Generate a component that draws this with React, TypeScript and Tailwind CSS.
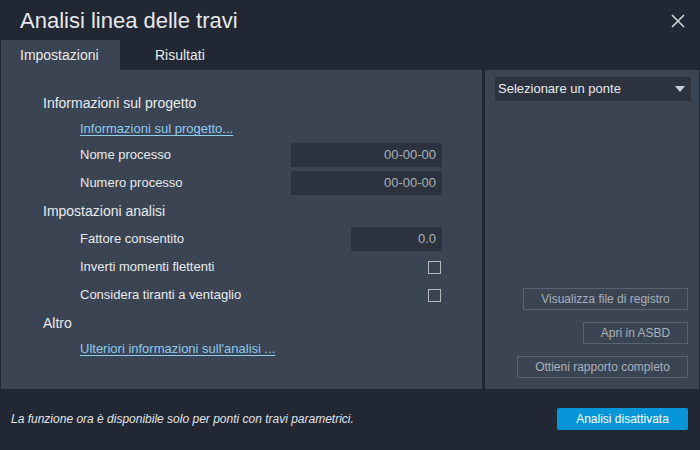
import { useState } from "react";

function Row({ label, children }: { label: string; children?: React.ReactNode }) {
    return (
        <div className="flex h-7 items-center justify-between pl-[37px]">
            <span>{label}</span>
            {children}
        </div>
    );
}

function Field({ value, w }: { value: string; w: string }) {
    return (
        <div className={`flex h-6 items-center justify-end bg-[#2c333e] pr-[6px] text-[#a9b0b9] ${w}`}>
            {value}
        </div>
    );
}

function Box() {
    return <div className="mr-[1px] h-[13px] w-[13px] border border-[#b4b9c0]" />;
}

export default function App() {
    const [tab, setTab] = useState(0);

    return (
        <div
            className="flex h-[450px] w-[700px] flex-col bg-[#222833] text-[13px] text-[#e8eaed]"
            style={{ fontFamily: "'Liberation Sans', Arial, sans-serif" }}
        >
            {/* Title */}
            <div className="flex h-10 items-center justify-between pl-5 pr-[14px] pt-[1px]">
                <h1 className="text-[22px] text-[#e6e8eb]">Analisi linea delle travi</h1>
                <svg width="16" height="16" viewBox="0 0 16 16" className="text-[#d0d3d8]">
                    <path d="M2 2 L14 14 M14 2 L2 14" stroke="currentColor" strokeWidth="1.6" />
                </svg>
            </div>

            {/* Tabs */}
            <div className="flex h-[30px] pl-[1px] text-[14px]">
                <button
                    onClick={() => setTab(0)}
                    className={`w-[119px] pl-[19px] text-left ${tab === 0 ? "bg-[#3b4453]" : ""}`}
                >
                    Impostazioni
                </button>
                <button
                    onClick={() => setTab(1)}
                    className={`w-[119px] pl-[35px] text-left ${tab === 1 ? "bg-[#3b4453]" : ""}`}
                >
                    Risultati
                </button>
            </div>

            {/* Body */}
            <div className="flex h-[319px] gap-[3px] px-[1px]">
                <div className="w-[481px] bg-[#3b4453] pl-[42px] pr-10 pt-[19px]">
                    <div className="flex h-7 items-center text-[14px]">Informazioni sul progetto</div>
                    <div className="flex h-6 items-center pl-[37px]">
                        <a className="cursor-pointer text-[#8ccbf0] underline underline-offset-2">Informazioni sul progetto...</a>
                    </div>
                    <Row label="Nome processo"><Field value="00-00-00" w="w-[151px]" /></Row>
                    <Row label="Numero processo"><Field value="00-00-00" w="w-[151px]" /></Row>
                    <div className="flex h-7 items-center text-[14px]">Impostazioni analisi</div>
                    <Row label="Fattore consentito"><Field value="0.0" w="w-[91px]" /></Row>
                    <Row label="Inverti momenti flettenti"><Box /></Row>
                    <Row label="Considera tiranti a ventaglio"><Box /></Row>
                    <div className="flex h-7 items-center text-[14px]">Altro</div>
                    <div className="flex h-6 items-center pl-[37px]">
                        <a className="cursor-pointer text-[#8ccbf0] underline underline-offset-2">Ulteriori informazioni sull'analisi ...</a>
                    </div>
                </div>

                <div className="flex flex-1 flex-col bg-[#3b4453] pl-[10px] pr-[8px] pt-[7px]">
                    <div className="flex h-6 items-center justify-between bg-[#2c333e] pl-[3px] pr-[6px]">
                        <span>Selezionare un ponte</span>
                        <svg width="10" height="6" viewBox="0 0 10 6">
                            <path d="M0 0 H10 L5 6 Z" fill="#c9ced6" />
                        </svg>
                    </div>
                    <div className="mt-auto mb-[11px] flex flex-col items-end gap-3 pr-[3px] text-[12px] text-[#a9b0b9]">
                        <div className="flex h-[22px] w-[165px] items-center justify-center border border-[#5a6371]">Visualizza file di registro</div>
                        <div className="flex h-[22px] w-[105px] items-center justify-center border border-[#5a6371]">Apri in ASBD</div>
                        <div className="flex h-[22px] w-[171px] items-center justify-center border border-[#5a6371]">Ottieni rapporto completo</div>
                    </div>
                </div>
            </div>

            {/* Footer */}
            <div className="flex flex-1 items-center justify-between pl-[11px] pr-[12px] pb-[1px]">
                <span className="text-[12px] italic text-[#e0e3e7]">La funzione ora è disponibile solo per ponti con travi parametrici.</span>
                <button className="h-[22px] w-[131px] rounded-[2px] bg-[#0696d7] text-[12px] text-white">Analisi disattivata</button>
            </div>
        </div>
    );
}
